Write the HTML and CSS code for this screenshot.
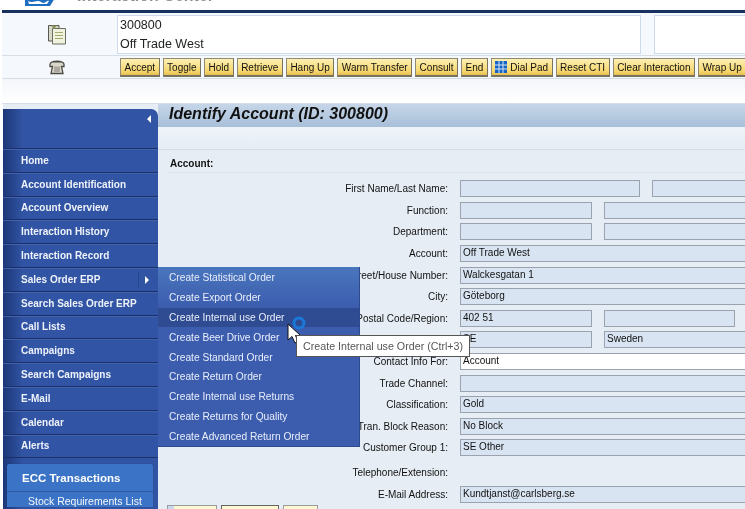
FILE: index.html
```html
<!DOCTYPE html>
<html lang="en">
  <head>
    <meta charset="UTF-8" />
    <title>Interaction Center</title>
    <link rel="stylesheet" href="styles.css">
  </head>
  <body>
    <div class="page">
      <div class="brand">
        <svg class="logo" width="30" height="10" viewBox="0 0 30 10">
          <path d="M0 0H30L25 8H0Z" fill="#1f6fc0" />
          <path d="M3 3C8 6 12 1 16 4S22 2 24 3L22 6H4Z" fill="#fff" />
        </svg>
        <span class="brand-title">Interaction Center</span>
      </div>

      <div class="info-row">
        <div class="icon-cell">
          <svg width="20" height="21" viewBox="0 0 20 21">
            <path d="M1.500 1.500H12V17H1.500Z" fill="#d8d8c8" stroke="#55584e" />
            <path d="M5.500 4.500H18.500V20H5.500Z" fill="#f1f2dc" stroke="#6b6f62" />
            <path d="M8 8.500H16M8 11.500H16M8 14.500H16" stroke="#a3ab72" />
            <path d="M4 1.500H10L7 5Z" fill="#8d9457" />
          </svg>
        </div>
        <div class="info-box info-main">
          <div>300800</div>
          <div>Off Trade West</div>
        </div>
        <div class="info-box info-side"></div>
      </div>

      <div class="button-row">
        <div class="icon-cell">
          <svg width="16" height="15" viewBox="0 0 16 15">
            <path d="M1 5C0 0 16 0 15 5V6.500H12.500L14 13.500H2L3.500 6.500H1Z" fill="#dcd8cc" stroke="#4c4c46" stroke-width="1.300" />
            <path d="M6 6.500V12M8 6.500V12M10 6.500V12" stroke="#7b7a70" />
            <path d="M3 2.500H13" stroke="#8d8c80" />
          </svg>
        </div>
        <div class="cti-buttons">
          <button class="cti-btn">Accept</button>
          <button class="cti-btn">Toggle</button>
          <button class="cti-btn">Hold</button>
          <button class="cti-btn">Retrieve</button>
          <button class="cti-btn">Hang Up</button>
          <button class="cti-btn">Warm Transfer</button>
          <button class="cti-btn">Consult</button>
          <button class="cti-btn">End</button>
          <button class="cti-btn dial-btn">
            <svg width="12" height="12" viewBox="0 0 12 12">
              <rect width="12" height="12" fill="#1565c8" />
              <path d="M4 0V12M8 0V12M0 4H12M0 8H12" stroke="#d8e4ee" />
            </svg>
            Dial Pad
          </button>
          <button class="cti-btn">Reset CTI</button>
          <button class="cti-btn">Clear Interaction</button>
          <button class="cti-btn">Wrap Up</button>
        </div>
      </div>

      <div class="spacer-row"></div>

      <div class="workspace">
        <nav class="sidebar">
          <div class="sidebar-head"><span class="collapse-arrow"></span></div>
          <a class="nav-item">Home</a>
          <a class="nav-item">Account Identification</a>
          <a class="nav-item">Account Overview</a>
          <a class="nav-item">Interaction History</a>
          <a class="nav-item">Interaction Record</a>
          <a class="nav-item has-sub">Sales Order ERP<span class="sub-arrow"></span></a>
          <a class="nav-item">Search Sales Order ERP</a>
          <a class="nav-item">Call Lists</a>
          <a class="nav-item">Campaigns</a>
          <a class="nav-item">Search Campaigns</a>
          <a class="nav-item">E-Mail</a>
          <a class="nav-item">Calendar</a>
          <a class="nav-item">Alerts</a>
          <div class="ecc-panel">
            <div class="ecc-title">ECC Transactions</div>
            <div class="ecc-item">Stock Requirements List</div>
          </div>
        </nav>

        <main class="content">
          <h1 class="page-title">Identify Account (ID: 300800)</h1>
          <div class="sub-bar"></div>
          <h2 class="section-title">Account:</h2>

          <div class="form-row">
            <label>First Name/Last Name:</label>
            <span class="field w-name"></span>
            <span class="field grow"></span>
          </div>
          <div class="form-row">
            <label>Function:</label>
            <span class="field w-half"></span>
            <span class="field grow"></span>
          </div>
          <div class="form-row">
            <label>Department:</label>
            <span class="field w-half"></span>
            <span class="field grow"></span>
          </div>
          <div class="form-row">
            <label>Account:</label>
            <span class="field grow">Off Trade West</span>
          </div>
          <div class="form-row">
            <label>Street/House Number:</label>
            <span class="field grow">Walckesgatan 1</span>
          </div>
          <div class="form-row">
            <label>City:</label>
            <span class="field grow">Göteborg</span>
          </div>
          <div class="form-row">
            <label>Postal Code/Region:</label>
            <span class="field w-half">402 51</span>
            <span class="field w-half-b"></span>
          </div>
          <div class="form-row">
            <label></label>
            <span class="field w-half">SE</span>
            <span class="field grow">Sweden</span>
          </div>
          <div class="form-row">
            <label>Contact Info For:</label>
            <span class="field grow editable">Account</span>
          </div>
          <div class="form-row">
            <label>Trade Channel:</label>
            <span class="field grow"></span>
          </div>
          <div class="form-row">
            <label>Classification:</label>
            <span class="field grow">Gold</span>
          </div>
          <div class="form-row">
            <label>Tran. Block Reason:</label>
            <span class="field grow">No Block</span>
          </div>
          <div class="form-row">
            <label>Customer Group 1:</label>
            <span class="field grow">SE Other</span>
          </div>
          <div class="form-row tel-row">
            <label>Telephone/Extension:</label>
          </div>
          <div class="form-row">
            <label>E-Mail Address:</label>
            <span class="field grow">Kundtjanst@carlsberg.se</span>
          </div>

          <div class="form-actions">
            <span class="action-btn a1"></span>
            <span class="action-btn a2">
              <svg width="14" height="6" viewBox="0 0 14 6">
                <path d="M1 6V1H6V6" fill="none" stroke="#555" />
                <path d="M8 0L10 2L8 5L6 3Z" fill="#f0d020" />
              </svg>
            </span>
            <span class="action-btn a3"></span>
          </div>
        </main>
      </div>

      <div class="flyout">
        <a class="flyout-item">Create Statistical Order</a>
        <a class="flyout-item">Create Export Order</a>
        <a class="flyout-item hover">Create Internal use Order</a>
        <a class="flyout-item">Create Beer Drive Order</a>
        <a class="flyout-item">Create Standard Order</a>
        <a class="flyout-item">Create Return Order</a>
        <a class="flyout-item">Create Internal use Returns</a>
        <a class="flyout-item">Create Returns for Quality</a>
        <a class="flyout-item">Create Advanced Return Order</a>
      </div>

      <svg class="busy-cursor" width="24" height="32" viewBox="0 0 24 32">
        <circle cx="12" cy="7" r="5" fill="none" stroke="#1a78d8" stroke-width="3" />
        <path d="M1 8V24L5 20.500L8 27L11 25.500L8.500 19.500H13.500Z" fill="#fff" stroke="#111" />
      </svg>
      <div class="tooltip">Create Internal use Order (Ctrl+3)</div>
    </div>
  </body>
</html>
```

FILE: styles.css
```css
* {
  margin: 0;
  padding: 0;
  box-sizing: border-box;
  font-family: "Liberation Sans", Arial, sans-serif;
}
body {
  background: white;
  overflow: hidden;
}
.page {
  position: relative;
  width: 745px;
  height: 509px;
  overflow: hidden;
  filter: blur(0.3px);
}
.brand {
  height: 10px;
  display: flex;
  align-items: flex-end;
  overflow: hidden;
  padding-left: 25px;
  background: white;
}
.logo {
  margin-bottom: 2px;
  flex: none;
}
.brand-title {
  margin-left: 22px;
  margin-bottom: 6px;
  font-size: 16px;
  line-height: 16px;
  font-weight: bold;
  color: #8b8f96;
  white-space: nowrap;
}
.info-row {
  height: 46px;
  margin-left: 2px;
  display: flex;
  border-top: 3px solid #17325f;
  padding: 2px 0 1px;
  background: #f5f8fc;
  border-bottom: 1px solid #d5dde7;
}
.icon-cell {
  width: 115px;
  flex: none;
  display: flex;
  justify-content: center;
  align-items: center;
  padding-right: 6px;
}
.info-box {
  background: white;
  border: 1px solid #cddaeb;
}
.info-main {
  width: 524px;
  padding: 0 2px;
  font-size: 12.500px;
  line-height: 19px;
  color: #222;
}
.info-side {
  margin-left: 13px;
  flex: 1;
  border-right: 0;
}
.button-row {
  height: 23px;
  margin-left: 2px;
  display: flex;
  background: #f5f8fc;
  border-bottom: 1px solid #d5dde7;
}
.cti-buttons {
  display: flex;
  gap: 3px;
  padding: 2px 0 0 3px;
  white-space: nowrap;
}
.cti-btn {
  height: 19px;
  padding: 0 3.500px;
  display: flex;
  align-items: center;
  gap: 3px;
  flex: none;
  font-size: 10px;
  color: #111;
  background: linear-gradient(#fdf0b4, #f6d76f 75%, #e6bf52);
  border: 1px solid #8f8a74;
  border-right-color: #77735f;
  border-bottom: 2px solid #77735f;
}
.spacer-row {
  height: 25px;
  margin-left: 2px;
  background: linear-gradient(#f4f6fa, white);
  border-bottom: 1px solid #d5dde7;
}
.workspace {
  height: 405px;
  margin-left: 3px;
  display: flex;
  background: #e6edf5;
}
.sidebar {
  width: 155px;
  flex: none;
  margin-top: 5px;
  border-top-right-radius: 7px;
  overflow: hidden;
  background: linear-gradient(90deg, #1d3678, #3155a4 20px);
}
.sidebar-head {
  height: 40px;
  display: flex;
  justify-content: flex-end;
  padding: 6px 7px 0 0;
  border-bottom: 1px solid #1c2f66;
}
.collapse-arrow {
  width: 0;
  height: 0;
  border: 4px solid transparent;
  border-right: 4px solid white;
  border-left: 0;
}
.nav-item {
  height: 23.800px;
  display: flex;
  align-items: center;
  padding-left: 18px;
  font-size: 10px;
  font-weight: bold;
  color: #eef2fa;
  border-bottom: 1px solid #1c2f66;
  box-shadow: inset 0 1px 0 #3f63b0;
  white-space: nowrap;
}
.has-sub {
  position: relative;
}
.has-sub::after {
  content: "";
  position: absolute;
  right: 19px;
  top: 4px;
  height: 15px;
  border-left: 1px solid #27458c;
}
.sub-arrow {
  position: absolute;
  right: 9px;
  top: 8px;
  width: 0;
  height: 0;
  border: 4px solid transparent;
  border-left: 4px solid white;
  border-right: 0;
}
.ecc-panel {
  margin: 6px 5px 0 4px;
  background: #3b74c6;
  border-radius: 2px 2px 0 0;
  box-shadow: 0 0 1px #1c2f66;
}
.ecc-title {
  height: 28px;
  display: flex;
  align-items: center;
  padding-left: 15px;
  font-size: 11.500px;
  font-weight: bold;
  color: white;
  border-bottom: 1px solid #2a5aa6;
}
.ecc-item {
  padding: 3px 0 0 21px;
  font-size: 10.500px;
  color: #f4f7fd;
  white-space: nowrap;
}
.content {
  flex: 1;
  min-width: 0;
  overflow: hidden;
}
.page-title {
  height: 23px;
  padding-left: 11px;
  font-size: 16px;
  line-height: 20px;
  font-style: italic;
  font-weight: bold;
  color: #111;
  background: linear-gradient(#c6d6e8, #a8bfd9);
}
.sub-bar {
  height: 23px;
  background: linear-gradient(#eff3f8, #e6edf5);
  border-bottom: 1px solid #d5dde7;
}
.section-title {
  margin: 8px 0 5px 9px;
  padding: 0 0 3px 3px;
  height: 15px;
  font-size: 10px;
  line-height: 12px;
  font-weight: bold;
  color: #111;
  border-bottom: 1px solid #dbe2ea;
}
.form-row {
  height: 21.600px;
  display: flex;
  align-items: center;
  gap: 12px;
}
.form-row label {
  width: 290px;
  flex: none;
  text-align: right;
  font-size: 10px;
  color: #111;
  white-space: nowrap;
}
.field {
  height: 17px;
  padding: 0 2px;
  font-size: 10px;
  line-height: 13px;
  color: #111;
  background: #d9e4f2;
  border: 1.500px solid #9aa2ad;
  white-space: nowrap;
}
.w-name {
  width: 180px;
}
.w-half {
  width: 132px;
}
.w-half-b {
  width: 131px;
}
.grow {
  flex: 1;
  border-right: 0;
}
.editable {
  background: white;
}
.tel-row {
  margin-top: 3px;
}
.form-actions {
  display: flex;
  gap: 4px;
  margin-left: 9px;
}
.action-btn {
  height: 8px;
  background: #fdf8d2;
  border: 1px solid #9a9c9e;
  border-bottom: 0;
  overflow: hidden;
}
.a1 {
  width: 50px;
  background: linear-gradient(90deg, #c9d8ee 6px, #fdf8d2 6px);
}
.a2 {
  width: 58px;
  padding-left: 3px;
  border-color: #666;
}
.a3 {
  width: 35px;
}
.flyout {
  position: absolute;
  left: 158px;
  top: 267px;
  width: 202px;
  height: 180px;
  padding-top: 1px;
  background: linear-gradient(#4a76bd, #3c5dae 40px);
  border-right: 1px solid #2d4a8f;
  border-bottom: 1px solid #2d4a8f;
}
.flyout-item {
  height: 19.800px;
  display: flex;
  align-items: center;
  padding-left: 11px;
  font-size: 10.200px;
  color: #e8eefa;
  white-space: nowrap;
}
.flyout-item.hover {
  background: #2f4c92;
}
.busy-cursor {
  position: absolute;
  left: 287px;
  top: 316px;
}
.tooltip {
  position: absolute;
  left: 296px;
  top: 335px;
  width: 174px;
  height: 22px;
  padding-left: 6px;
  font-size: 10.700px;
  line-height: 21px;
  color: #575757;
  background: white;
  border: 1px solid #555;
  white-space: nowrap;
}
```
